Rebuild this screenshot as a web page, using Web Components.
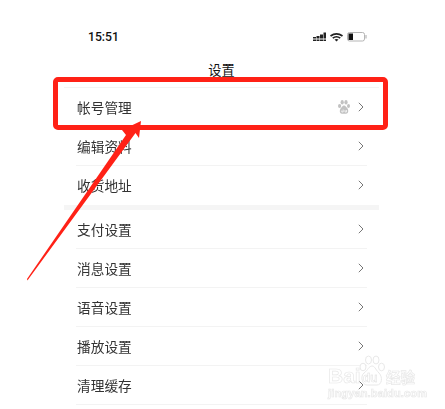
<!DOCTYPE html>
<html><head><meta charset="utf-8"><style>html,body{margin:0;background:#fff}</style></head><body>
<template id="t-row"><style>
:host{display:flex;align-items:center;height:38px;border-bottom:1px solid #f3f3f3;margin:0 12px;font:13.7px "Noto Sans CJK SC",sans-serif;color:#333;padding-left:1px}
.t{flex:1;line-height:18px}
.end{display:flex;align-items:center;gap:8px;margin-right:3px}
</style><span class="t"><slot></slot></span><span class="end"><slot name="extra"></slot><svg width="6" height="10" viewBox="0 0 6 10"><path d="M.8.8 5 5 .8 9.200" fill="none" stroke="#777" stroke-width="1"/></svg></span></template>
<script>
class SetRow extends HTMLElement{constructor(){super();this.attachShadow({mode:'open'}).append(document.getElementById('t-row').content.cloneNode(true))}}
customElements.define('set-row',SetRow);
class StatusBar extends HTMLElement{constructor(){super();this.attachShadow({mode:'open'}).innerHTML=`<style>
:host{display:flex;justify-content:space-between;align-items:center;height:18px;padding:28px 0 0 24px;margin-right:12px;font:500 12.2px Roboto,sans-serif;color:#111}
svg{display:block}</style><span>15:51</span>
<svg width="54" height="10" viewBox="0 0 54 10"><g fill="#222"><path d="M0 5h3v1.500H0zM0 7.500h3V9H0zM3.500 4h3v2.500h-3zM3.500 7.500h3V9h-3zM7 2.500h3v4H7zM7 7.500h3V9H7zM10.500 .5h2.500v6h-2.500zM10.500 7.500h2.500V9h-2.500z"/><path d="M17 3.300Q23.500-1.500 30 3.300L29 4.800Q23.500.9 18 4.800zM19.200 5.400Q23.500 2.400 27.800 5.400L26.700 6.700Q23.500 4.500 20.300 6.700zM21.500 7.600Q23.500 6.300 25.500 7.600L23.500 9.500z"/></g><rect x="34.500" y=".5" width="17" height="8.500" rx="2" fill="#fff" stroke="#b5b5b5"/><rect x="35.500" y="1.500" width="4.500" height="6.500" fill="#111"/><rect x="52.500" y="3" width="1" height="3.500" fill="#aaa"/></svg>`}}
customElements.define('status-bar',StatusBar);
class PawIcon extends HTMLElement{constructor(){super();this.attachShadow({mode:'open'}).innerHTML=`<style>:host{display:block;line-height:0}</style><svg width="12" height="14" viewBox="0 0 12 14" fill="#c2c2c2"><ellipse cx="1.600" cy="6" rx="1.600" ry="2"/><ellipse cx="4.200" cy="2.200" rx="1.600" ry="2.200"/><ellipse cx="8" cy="2.200" rx="1.600" ry="2.200"/><ellipse cx="10.500" cy="6" rx="1.500" ry="2"/><path d="M6 5.500C4.500 5.500 4 7 2.800 8.300S1 13.800 4 13.800h4C11 13.800 10.500 9.500 9.300 8.300S7.500 5.500 6 5.500Z"/><path d="M3.800 10.500v1.500h1.400V9.500M7 10v2h1.500v-2" fill="none" stroke="#fff" stroke-width=".7"/></svg>`}}
customElements.define('paw-icon',PawIcon);
class SettingsScreen extends HTMLElement{constructor(){super();this.attachShadow({mode:'open'}).innerHTML=`<style>
:host{display:block;position:relative;width:445px;height:409px;overflow:hidden;box-sizing:border-box;padding:0 66px 0 64px;background:#fff}
h1{margin:0;height:42px;box-sizing:border-box;padding-top:15px;text-align:center;font:400 13.2px/18px "Noto Sans CJK SC",sans-serif;color:#111;border-bottom:1px solid #f3f3f3}
.box{position:absolute;left:52.500px;top:77px;width:335px;height:52.500px;box-sizing:border-box;border:5.800px solid #ff2116;border-radius:5px}
.arrow{position:absolute;left:0;top:0}
.wm{position:absolute;left:328px;top:355px;width:95px;height:44px;color:#fff;-webkit-text-stroke:.7px #e8e8e8;font-family:"Liberation Sans",sans-serif;filter:blur(.3px)}
.wm span{position:absolute;white-space:nowrap}
.list{filter:blur(.25px)}
</style>
<status-bar></status-bar>
<h1>设置</h1>
<div class="list"><slot></slot></div>
<div class="wm"><span style="left:0;top:9px;font-size:21px;font-weight:700">Bai</span>
<svg style="position:absolute;left:30px;top:0" width="28" height="31" viewBox="0 0 28 31" fill="#fff" stroke="#e8e8e8" stroke-width="1"><ellipse cx="5" cy="12" rx="3" ry="3.800"/><ellipse cx="10.500" cy="5" rx="3" ry="4"/><ellipse cx="18" cy="5" rx="3" ry="4"/><ellipse cx="23.500" cy="12" rx="3" ry="3.800"/><path d="M14 11C11 11 10 15 6 18S4 30 9 30h10c5 0 6-8 2-12S17 11 14 11Z"/></svg>
<span style="left:35px;top:16px;font-size:12px;font-weight:700;-webkit-text-stroke:.5px #e0e0e0">du</span>
<span style="left:58px;top:11px;font:700 14.500px 'Noto Sans CJK SC',sans-serif">经验</span>
<span style="left:0;top:32px;font-size:11px;font-weight:700;letter-spacing:.15px">jingyan.baidu.com</span></div>
<svg class="arrow" width="445" height="409" viewBox="0 0 445 409"><polygon points="141,121 139,138 135.500,133 28.500,279 27.500,280.500 27,279 126,135 122,130" fill="#ff2116"/></svg>
<div class="box"></div>`}}
customElements.define('settings-screen',SettingsScreen);
</script>
<settings-screen>
<set-row>帐号管理<paw-icon slot="extra"></paw-icon></set-row>
<set-row>编辑资料</set-row>
<set-row style="border-bottom-color:transparent">收货地址</set-row>
<div style="height:5px;background:#f5f5f5"></div>
<set-row>支付设置</set-row>
<set-row>消息设置</set-row>
<set-row>语音设置</set-row>
<set-row>播放设置</set-row>
<set-row>清理缓存</set-row>
</settings-screen>
</body></html>
